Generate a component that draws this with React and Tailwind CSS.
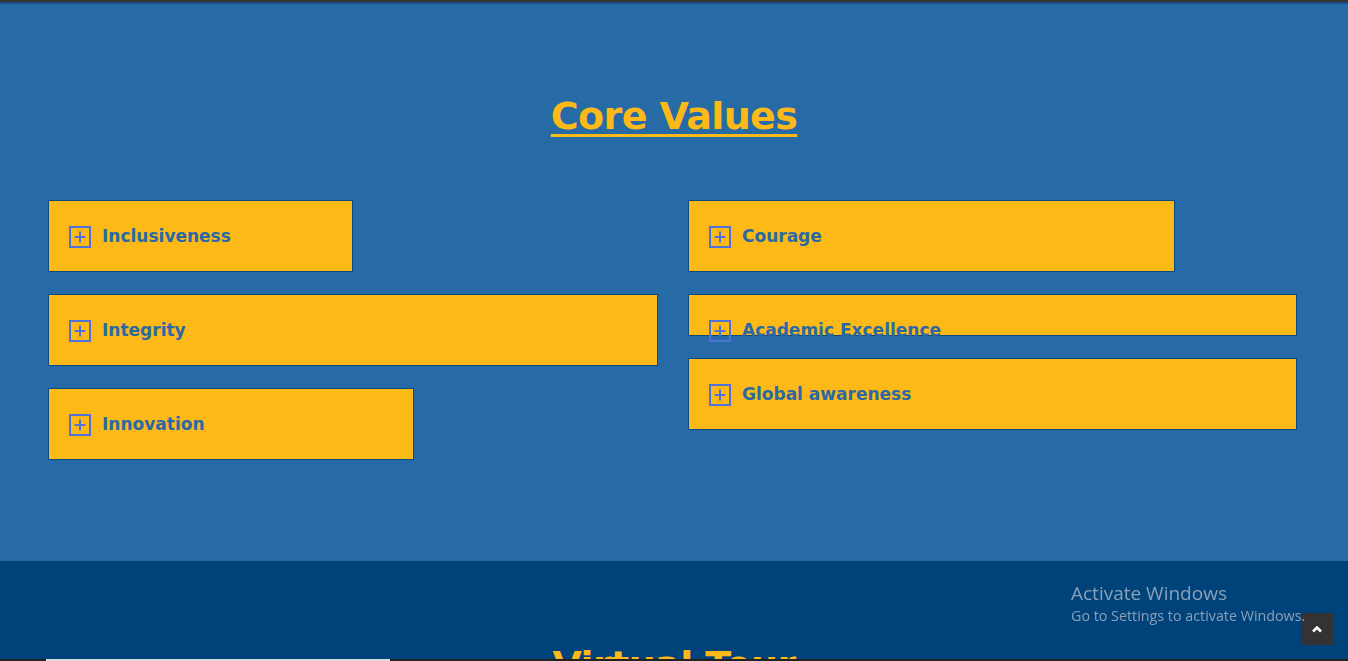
import React from "react";

const PlusBox = () => (
  <svg width="22" height="22" viewBox="0 0 22 22" className="shrink-0">
    <rect x="1" y="1" width="20" height="20" fill="none" stroke="#4f72d8" strokeWidth="2" />
    <path d="M11 5.5v11M5.5 11h11" stroke="#4f72d8" strokeWidth="2" />
  </svg>
);

const font = { fontFamily: '"DejaVu Sans", "Noto Sans", sans-serif' };

function ValueItem({ label, width, short }) {
  return (
    <div
      className={`${width} ${short ? "h-[42px]" : "h-[72px]"} bg-[#fdb917] border border-[#0b4a82] relative`}
    >
      <div className="absolute left-[20px] top-[23px] flex items-center gap-[11px]">
        <PlusBox />
        <span className="text-[#2a69a6] text-[17px] font-bold whitespace-nowrap" style={font}>
          {label}
        </span>
      </div>
    </div>
  );
}

export default function App() {
  return (
    <div className="min-h-screen bg-[#00427a] overflow-hidden" style={font}>
      <div className="h-[2px] bg-[#333]" />
      <div className="h-[2px] bg-[#164f86]" />

      {/* Core values */}
      <section className="bg-[#266ba6] h-[557px] pt-[88px]">
        <h2 className="text-center text-[38px] leading-[48px] font-bold tracking-[-0.6px] text-[#fdb917] underline decoration-[3px] underline-offset-[5px]">
          Core Values
        </h2>

        <div className="mt-[60px] ml-[48px] grid grid-cols-[640px_610px]">
          <div className="flex flex-col gap-[22px]">
            <ValueItem label="Inclusiveness" width="w-[305px]" />
            <ValueItem label="Integrity" width="w-[610px]" />
            <ValueItem label="Innovation" width="w-[366px]" />
          </div>
          <div className="flex flex-col">
            <ValueItem label="Courage" width="w-[487px]" />
            <div className="mt-[22px]">
              <ValueItem label="Academic Excellence" width="w-[609px]" short />
            </div>
            <div className="mt-[22px]">
              <ValueItem label="Global awareness" width="w-[609px]" />
            </div>
          </div>
        </div>
      </section>

      {/* Virtual tour */}
      <section className="bg-[#00427a] pt-[80px] pb-[60px] relative">
        <h2 className="text-center text-[38px] leading-[48px] font-bold tracking-[-0.6px] text-[#fdb917]">Virtual Tour</h2>
      </section>

      {/* scroll to top */}
      <button className="fixed left-[1301px] top-[613px] w-[32px] h-[32px] bg-[#333] flex items-center justify-center">
        <svg width="12" height="8" viewBox="0 0 12 8">
          <path d="M2 6.5 6 2.5l4 4" fill="none" stroke="#fff" strokeWidth="2.6" />
        </svg>
      </button>

      {/* Windows watermark */}
      <div className="fixed z-10 left-[1071px] top-[580px] text-[#8aa0b8] pointer-events-none whitespace-nowrap" style={{ fontFamily: '"Open Sans", "Noto Sans", sans-serif' }}>
        <div className="text-[19px] leading-[26px]">Activate Windows</div>
        <div className="text-[14.3px] leading-[20px]">Go to Settings to activate Windows.</div>
      </div>

      {/* bottom scrollbar strip */}
      <div className="fixed left-0 right-0 bottom-0 h-[2px] bg-[#222]">
        <div className="ml-[46px] w-[344px] h-full bg-[#dcdcdc]" />
      </div>
    </div>
  );
}
